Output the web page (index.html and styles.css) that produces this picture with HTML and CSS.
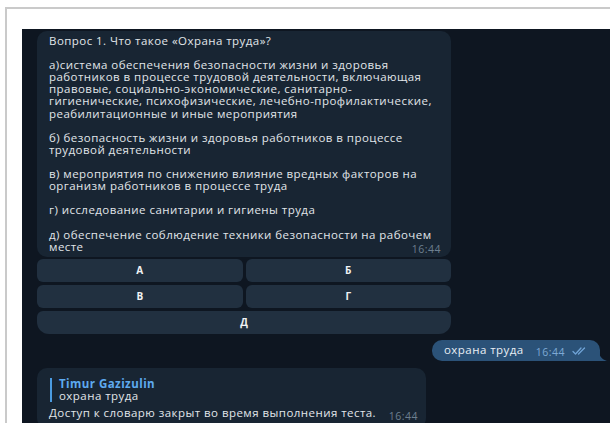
FILE: index.html
```html
<!DOCTYPE html>
<html lang="ru">
<head>
<meta charset="utf-8">
<title>Чат</title>
<link rel="stylesheet" href="styles.css">
</head>
<body>
<div class="frame">
  <div class="chat">
    <div class="history">
      <div class="bot-msg">
        <div class="bubble question">
          <p>Вопрос 1. Что такое «Охрана труда»?</p>
          <p>а)система обеспечения безопасности жизни и здоровья<br>работников в процессе трудовой деятельности, включающая<br>правовые, социально-экономические, санитарно-<br>гигиенические, психофизические, лечебно-профилактические,<br>реабилитационные и иные мероприятия</p>
          <p>б) безопасность жизни и здоровья работников в процессе<br>трудовой деятельности</p>
          <p>в) мероприятия по снижению влияние вредных факторов на<br>организм работников в процессе труда</p>
          <p>г) исследование санитарии и гигиены труда</p>
          <p class="last">д) обеспечение соблюдение техники безопасности на рабочем<br>месте<span class="time">16:44</span></p>
        </div>
        <div class="keyboard">
          <button class="key">А</button>
          <button class="key">Б</button>
          <button class="key">В</button>
          <button class="key">Г</button>
          <button class="key wide">Д</button>
        </div>
      </div>

      <div class="out-row">
        <div class="bubble out">
          <span class="out-text">охрана труда</span>
          <span class="time out-time">16:44</span>
          <svg class="ticks" width="16" height="10" viewBox="0 0 16 10" aria-hidden="true">
            <path d="M1 5.5 L3.5 8 L9 2" fill="none" stroke="#6fa3d6" stroke-width="1.3" stroke-linecap="round" stroke-linejoin="round"/>
            <path d="M6.5 8 L12.5 2" fill="none" stroke="#6fa3d6" stroke-width="1.3" stroke-linecap="round"/>
          </svg>
          <svg class="tail" width="8" height="10" viewBox="0 0 8 10" aria-hidden="true">
            <path d="M0 0 C0 5 3 8.5 8 10 L0 10 Z" fill="#2b5278"/>
          </svg>
        </div>
      </div>

      <div class="bubble reply-msg">
        <div class="quote">
          <div class="quote-name">Timur Gazizulin</div>
          <div class="quote-text">охрана труда</div>
        </div>
        <p class="last">Доступ к словарю закрыт во время выполнения теста.<span class="time">16:44</span></p>
      </div>
    </div>
  </div>
</div>
</body>
</html>
```

FILE: styles.css
```css
html, body {
  margin: 0;
  padding: 0;
  background: #ffffff;
  overflow: hidden;
  height: 100%;
}

body {
  font-family: "Open Sans", "Noto Sans", sans-serif;
}

.frame {
  margin: 7px 0 0 5px;
  border-top: 2px solid #cacaca;
  border-left: 2px solid #cacaca;
  padding: 20px 0 0 15px;
  height: 600px;
}

.chat {
  background: #0e1621;
  height: 100%;
  padding: 2px 0 0 15px;
}

.history {
  width: 414px;
  display: flex;
  flex-direction: column;
}

.bubble {
  background: #182533;
  color: #e1e5ea;
  font-size: 11.5px;
  font-weight: 500;
  letter-spacing: 0.45px;
  line-height: 12.1px;
  border-radius: 10px;
}

.bubble p {
  margin: 0 0 12.1px;
}

.bubble p.last {
  margin: 0;
}

.question {
  padding: 4px 12px 4px;
}

.time {
  float: right;
  font-size: 10.5px;
  font-weight: 400;
  letter-spacing: 0.5px;
  color: #6d7f8f;
  margin: 2px -2px -2px 0;
}

.keyboard {
  margin-top: 2px;
  display: grid;
  grid-template-columns: 1fr 1fr;
  gap: 3px 3px;
}

.key {
  height: 23px;
  border: 0;
  border-radius: 6px;
  background: #213040;
  color: #f0f2f4;
  font-family: inherit;
  font-size: 10px;
  font-weight: 700;
  padding: 0;
}

.key.wide {
  grid-column: 1 / span 2;
  border-radius: 6px 6px 12px 12px;
}

.out-row {
  display: flex;
  justify-content: flex-end;
  margin: 6px -149px 0 0;
}

.bubble.out {
  position: relative;
  background: #2b5278;
  border-radius: 10px 10px 0 10px;
  height: 21px;
  display: flex;
  align-items: center;
  padding: 0 8px 0 12px;
  box-sizing: border-box;
  width: 168px;
}

.out-text {
  color: #e8eef4;
}

.out-time {
  float: none;
  margin: 3px 0 0 12px;
  color: #7ea9d4;
}

.ticks {
  margin: 2px 0 0 7px;
}

.tail {
  position: absolute;
  right: -7px;
  bottom: 0;
}

.reply-msg {
  margin-top: 7px;
  width: 389px;
  box-sizing: border-box;
  padding: 10px 10px 8px 12px;
}

.quote {
  border-left: 2px solid #4b9be0;
  padding: 0 0 0 7px;
  margin: 0 0 5px 1px;
}

.quote-name {
  color: #5eaaef;
  font-weight: 700;
}

.reply-msg p.last .time {
  margin-top: 3px;
}
```
